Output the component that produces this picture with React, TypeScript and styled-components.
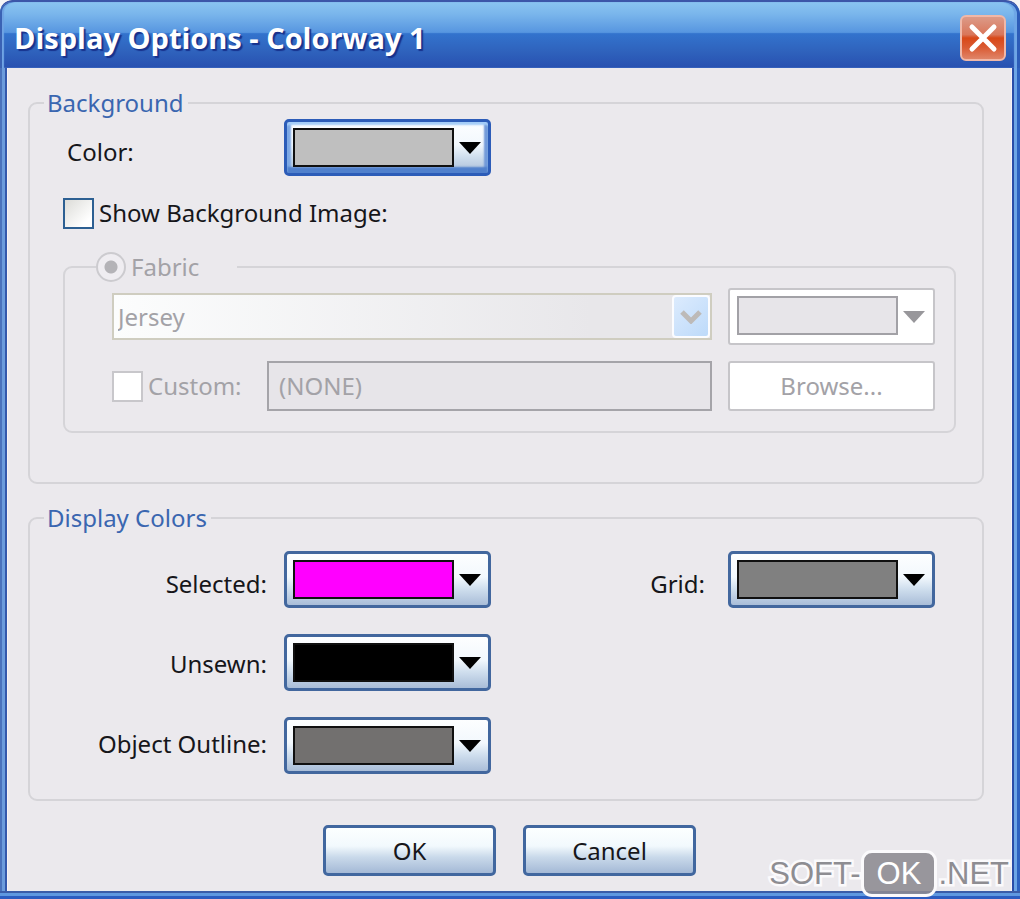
import React from "react";
import styled, { createGlobalStyle, css } from "styled-components";

const GlobalStyle = createGlobalStyle`
  *, *::before, *::after { box-sizing: border-box; }
  body {
    margin: 0;
    background: #f4f4f6;
    color: #16161a;
    font-family: "Noto Sans", Tahoma, sans-serif;
    font-size: 24px;
    line-height: 32px;
  }
  button, input, select { font: inherit; color: inherit; }
`;

const Window = styled.main`
  position: relative;
  display: flex;
  flex-direction: column;
  min-height: 100vh;
  border-radius: 12px 14px 0 0;
  overflow: hidden;
  background: #ebe9ed;
`;

const TitleBar = styled.header`
  display: flex;
  align-items: center;
  justify-content: space-between;
  height: 68px;
  padding: 6px 14px 0 14px;
  border-top: 2px solid #3c56a8;
  border-radius: 12px 14px 0 0;
  background: linear-gradient(#8ac4f0 0%, #7ab6ec 18%, #5796e0 46%, #3373cd 48%, #2f63bd 74%, #2850b0 100%);
  box-shadow: inset 2px 0 #3a62b4, inset -3px 0 #2c5cb8, inset 4px 0 1px #6fa4e4, inset -6px 0 1px #6ea6e6;
`;

const Title = styled.h1`
  margin: 0;
  color: #fff;
  font-family: "Open Sans", "Trebuchet MS", sans-serif;
  font-size: 29px;
  font-weight: 700;
  line-height: 40px;
  text-shadow: 2px 2px 1px #17318c;
`;

const CloseButton = styled.button`
  display: grid;
  place-items: center;
  width: 46px;
  height: 46px;
  padding: 0;
  border: 2px solid #f0b8a8;
  border-radius: 6px;
  background: linear-gradient(#dc9a88 0%, #d9765a 42%, #d84818 50%, #da5a32 72%, #e08468 100%);
`;

const Frame = styled.div`
  flex: 1;
  display: flex;
  flex-direction: column;
  padding: 0 8px 8px 7px;
  background: linear-gradient(90deg, #4a72bc 0 2px, #6c9cdc 2px 5px, #3358ac 5px 7px, transparent 7px calc(100% - 8px), #2a4ea8 calc(100% - 8px) calc(100% - 6px), #6ea6e6 calc(100% - 6px) calc(100% - 3px), #2e62c0 calc(100% - 3px));
`;

const Body = styled.div`
  flex: 1;
  display: flex;
  flex-direction: column;
  padding-top: 19px;
  border: solid #f8f2f6;
  border-width: 0 1px;
`;

const BottomEdge = styled.div`
  height: 8px;
  margin-top: -8px;
  background: linear-gradient(#3a5ca8 0 2px, #5f98e0 2px 5px, #2c5cc0 5px);
`;

const groupFrame = css`
  min-width: 0;
  border: 2px solid #d5d4d8;
  border-radius: 9px;
`;

const Group = styled.fieldset<{ $bottom: number }>`
  ${groupFrame}
  margin: 0 27px 18px 20px;
  padding: 0 26px ${(p) => p.$bottom}px 14px;
`;

const GroupTitle = styled.legend`
  padding: 0 4px 0 3px;
  color: #3a66b0;
`;

const Stack = styled.div`
  padding-left: 19px;
`;

const FieldLabel = styled.label`
  padding-top: 17px;
`;

const ColorRow = styled.div`
  display: flex;
  align-items: flex-start;
  padding-left: 4px;
  margin-bottom: 21px;

  ${FieldLabel} { width: 217px; }
`;

const Picker = styled.button<{ $focused?: boolean }>`
  display: flex;
  align-items: center;
  justify-content: space-between;
  width: 207px;
  height: 57px;
  padding: 0 6px 1px;
  border: 3px solid ${(p) => (p.$focused ? "#2c5cb8" : "#42679e")};
  border-radius: 5px;
  background: linear-gradient(#fdfeff 0%, #f2f8fd 45%, #d0dfee 68%, #a9bdd8 100%);
  color: #000;
  ${(p) => p.$focused && css`
    box-shadow: inset 0 3px 2px #a4cdf8, inset 0 -6px 2px #5080cc, inset 4px 0 2px #7ea8e4, inset -4px 0 2px #7098d8;
  `}

  &:disabled {
    border: 2px solid #c6c5c9;
    border-radius: 3px;
    padding: 0 7px 2px;
    background: #fff;
    color: #98979b;
  }
`;

const Swatch = styled.span<{ $color: string }>`
  width: 161px;
  height: 39px;
  border: 2px solid #101010;
  background: ${(p) => p.$color};

  ${Picker}:disabled & { border-color: #a2a1a6; }
`;

const Arrow = () => (
  <svg width="24" height="14" viewBox="0 0 24 14" aria-hidden="true">
    <path d="M1 2H23L12 14Z" fill="currentColor" />
  </svg>
);

type ColorPickerProps = { id?: string; color: string; focused?: boolean; disabled?: boolean; label?: string };

const ColorPicker = ({ id, color, focused, disabled, label }: ColorPickerProps) => (
  <Picker id={id} type="button" $focused={focused} disabled={disabled} aria-label={label} aria-haspopup="listbox">
    <Swatch $color={color} />
    <Arrow />
  </Picker>
);

const Option = styled.label<{ $disabled?: boolean }>`
  display: flex;
  align-items: center;
  gap: 5px;
  color: ${(p) => (p.$disabled ? "#a3a2a7" : "inherit")};
  white-space: nowrap;
`;

const Check = styled.input`
  appearance: none;
  flex: none;
  width: 31px;
  height: 31px;
  margin: 0;
  border: 2px solid #2c5f92;
  background: linear-gradient(135deg, #dcdcd8, #fff 80%);

  &:disabled { border-color: #c8c7cb; background: #fff; }
`;

const Radio = styled.input`
  appearance: none;
  flex: none;
  width: 30px;
  height: 30px;
  margin: 0;
  border: 2px solid #cccbcf;
  border-radius: 50%;
  background: radial-gradient(circle, #b4b3b7 0 6px, #efedf1 7px);
`;

const SubGroup = styled.fieldset`
  ${groupFrame}
  margin: 22px 0 0;
  padding: 0 19px 20px 31px;
`;

const SubGroupTitle = styled.legend`
  width: 141px;
  padding: 0;
`;

const FabricGrid = styled.div`
  display: grid;
  grid-template-columns: 1fr 207px;
  align-items: center;
  gap: 16px;
  padding: 5px 0 0 16px;
`;

const SelectBox = styled.div`
  position: relative;
  height: 47px;
`;

const Select = styled.select`
  appearance: none;
  width: 100%;
  height: 100%;
  padding: 0 48px 0 4px;
  border: 2px solid #cfcdc0;
  border-radius: 0;
  background: linear-gradient(90deg, #fcfdfd, #e8e7ea 80%);
  opacity: 1;

  &:disabled { color: #a3a2a7; opacity: 1; }
`;

const SelectArrow = styled.span`
  position: absolute;
  top: 2px;
  right: 2px;
  bottom: 2px;
  display: grid;
  place-items: center;
  width: 38px;
  border: 2px solid #fbfcff;
  border-radius: 4px;
  background: linear-gradient(135deg, #dcebfd, #bddafa);
  pointer-events: none;
`;

const CustomRow = styled.div`
  display: grid;
  grid-template-columns: 139px 1fr;
  gap: 16px;
  align-items: center;
`;

const PathInput = styled.input`
  width: 100%;
  min-width: 0;
  height: 50px;
  padding: 0 10px 2px;
  border: 2px solid #a5a4a9;
  background: #e7e5e9;

  &:disabled { color: #a3a2a7; }
`;

const PushButton = styled.button`
  width: 173px;
  height: 51px;
  padding: 0;
  border: 3px solid #41679f;
  border-radius: 5px;
  background: linear-gradient(#fcffff 0%, #f2f9fd 40%, #c9d9ea 65%, #a4b9d6 100%);

  &:disabled {
    width: 100%;
    height: 50px;
    border: 2px solid #c6c5c9;
    border-radius: 3px;
    background: #fff;
    color: #a3a2a7;
  }
`;

const ColorsRow = styled.div`
  display: flex;
  align-items: flex-start;
  justify-content: space-between;
  padding: 17px 21px 0 0;
`;

const FieldSet = styled.div<{ $gap: number }>`
  display: flex;
  gap: ${(p) => p.$gap}px;
`;

const Labels = styled.div<{ $width?: number }>`
  display: flex;
  flex-direction: column;
  gap: 48px;
  width: ${(p) => (p.$width ? `${p.$width}px` : "auto")};
  padding-top: 17px;
  text-align: right;

  ${FieldLabel} { padding: 0; }
`;

const Pickers = styled.div`
  display: flex;
  flex-direction: column;
  gap: 26px;
`;

const Actions = styled.footer`
  display: flex;
  justify-content: center;
  gap: 27px;
  padding: 6px 0 15px;
`;

const Watermark = styled.div`
  position: absolute;
  right: 11px;
  bottom: 2px;
  display: flex;
  align-items: center;
  color: #8e8d92;
  font-family: "Liberation Sans", Arial, sans-serif;
  font-size: 31px;
  paint-order: stroke fill;
  -webkit-text-stroke: 5px #fbfafc;
`;

const Badge = styled.span`
  margin: 0 1px 0 0;
  padding: 3px 13px 2px;
  border: 3px solid #fbfafc;
  border-radius: 11px;
  background: rgba(140, 138, 145, 0.88);
  color: #fff;
  line-height: 36px;
  -webkit-text-stroke: 0;
`;

export default function App() {
  return (
    <>
      <GlobalStyle />
      <Window>
        <TitleBar>
          <Title>Display Options - Colorway 1</Title>
          <CloseButton type="button" aria-label="Close">
            <svg width="30" height="30" viewBox="0 0 30 30" aria-hidden="true">
              <path d="M4 4L26 26M26 4L4 26" stroke="#fff" strokeWidth="5" strokeLinecap="round" />
            </svg>
          </CloseButton>
        </TitleBar>
        <Frame>
          <Body>
            <Group $bottom={49}>
              <GroupTitle>Background</GroupTitle>
              <Stack>
                <ColorRow>
                  <FieldLabel htmlFor="background-color">Color:</FieldLabel>
                  <ColorPicker id="background-color" color="#bfbfbf" focused />
                </ColorRow>
                <Option>
                  <Check type="checkbox" />
                  Show Background Image:
                </Option>
                <SubGroup>
                  <SubGroupTitle>
                    <Option $disabled>
                      <Radio type="radio" name="source" defaultChecked disabled />
                      Fabric
                    </Option>
                  </SubGroupTitle>
                  <FabricGrid>
                    <SelectBox>
                      <Select aria-label="Fabric" disabled defaultValue="Jersey">
                        <option>Jersey</option>
                      </Select>
                      <SelectArrow>
                        <svg width="22" height="14" viewBox="0 0 22 14" aria-hidden="true">
                          <path d="M2 2L11 11L20 2" fill="none" stroke="#bdbab8" strokeWidth="5" />
                        </svg>
                      </SelectArrow>
                    </SelectBox>
                    <ColorPicker color="#e7e5e9" disabled label="Fabric color" />
                    <CustomRow>
                      <Option $disabled>
                        <Check type="checkbox" disabled />
                        Custom:
                      </Option>
                      <PathInput type="text" aria-label="Custom image" defaultValue="(NONE)" disabled />
                    </CustomRow>
                    <PushButton type="button" disabled>Browse...</PushButton>
                  </FabricGrid>
                </SubGroup>
              </Stack>
            </Group>
            <Group $bottom={25}>
              <GroupTitle>Display Colors</GroupTitle>
              <ColorsRow>
                <FieldSet $gap={17}>
                  <Labels $width={223}>
                    <FieldLabel htmlFor="selected">Selected:</FieldLabel>
                    <FieldLabel htmlFor="unsewn">Unsewn:</FieldLabel>
                    <FieldLabel htmlFor="outline">Object Outline:</FieldLabel>
                  </Labels>
                  <Pickers>
                    <ColorPicker id="selected" color="#ff00ff" />
                    <ColorPicker id="unsewn" color="#000" />
                    <ColorPicker id="outline" color="#72706f" />
                  </Pickers>
                </FieldSet>
                <FieldSet $gap={23}>
                  <Labels>
                    <FieldLabel htmlFor="grid">Grid:</FieldLabel>
                  </Labels>
                  <ColorPicker id="grid" color="#808080" />
                </FieldSet>
              </ColorsRow>
            </Group>
            <Actions>
              <PushButton type="button">OK</PushButton>
              <PushButton type="button">Cancel</PushButton>
            </Actions>
          </Body>
        </Frame>
        <BottomEdge />
        <Watermark>
          SOFT-<Badge>OK</Badge>.NET
        </Watermark>
      </Window>
    </>
  );
}
